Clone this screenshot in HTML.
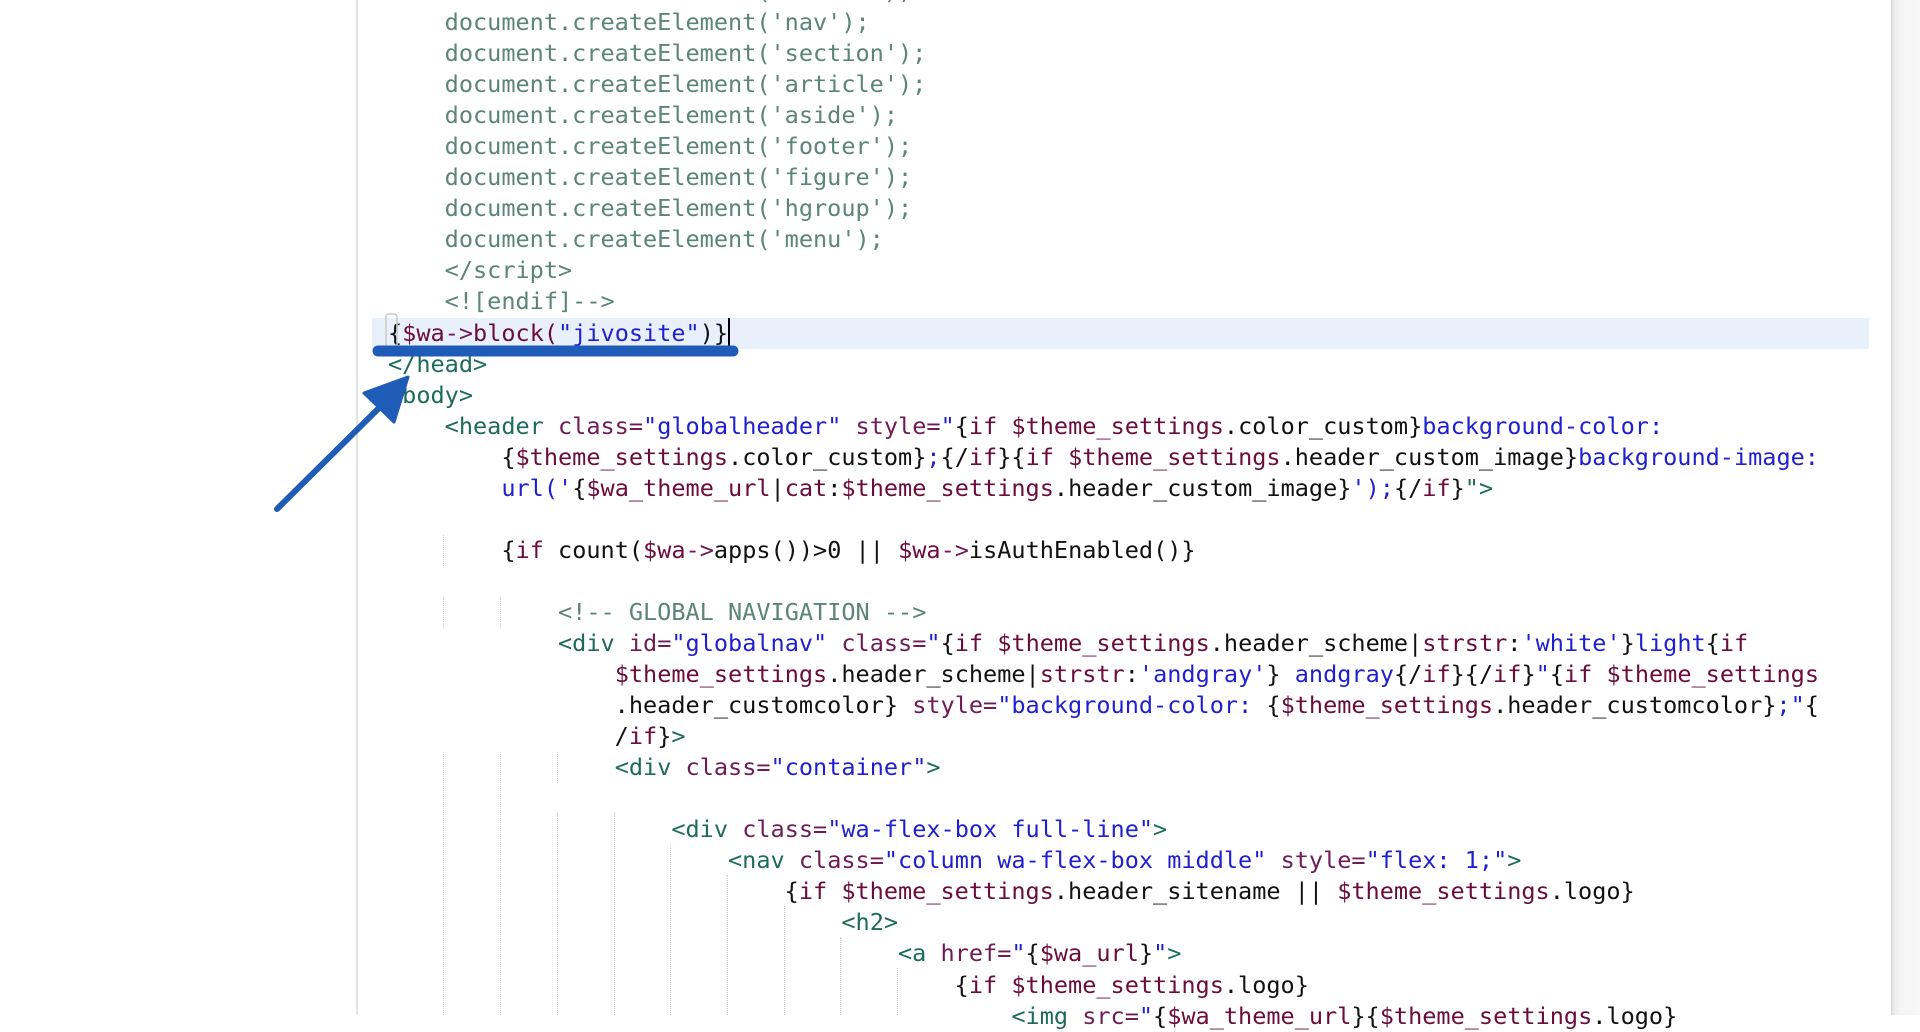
<!DOCTYPE html>
<html><head><meta charset="utf-8"><style>
html,body{margin:0;padding:0;width:1920px;height:1015px;overflow:hidden;background:#fff;}
.gut{position:absolute;left:356px;top:0;width:2px;height:1015px;background:#e4e4e4;}
.rp{position:absolute;left:1891px;top:0;width:29px;height:1015px;background:linear-gradient(90deg,#d6d6d6 0,#ececec 3px,#f5f5f5 10px,#f7f7f7);}
.hl{position:absolute;left:372px;top:318px;width:1497px;height:31px;background:#e8f1fb;}
pre{position:absolute;left:388px;top:-24px;margin:0;font-family:"DejaVu Sans Mono","Liberation Mono",monospace;font-size:23.54px;line-height:31.04px;color:#111;white-space:pre;}
.c{color:#5b8575}.t{color:#1d6b5a}.a{color:#6e1b56}.s{color:#1f1fcf}.k{color:#6a0c3c}
.g{position:absolute;width:0;border-left:1px dotted #cfcfcf;}
.cur{position:absolute;left:728px;top:318px;width:2px;height:31px;background:#000;}
</style></head><body>
<div class="gut"></div>
<div class="rp"></div>
<div class="hl"></div>
<div class="g" style="left:443px;top:535px;height:31px"></div>
<div class="g" style="left:443px;top:597px;height:31px"></div>
<div class="g" style="left:500px;top:597px;height:31px"></div>
<div class="g" style="left:443px;top:752px;height:263px"></div>
<div class="g" style="left:500px;top:752px;height:263px"></div>
<div class="g" style="left:557px;top:752px;height:31px"></div>
<div class="g" style="left:557px;top:813px;height:202px"></div>
<div class="g" style="left:614px;top:813px;height:202px"></div>
<div class="g" style="left:670px;top:844px;height:171px"></div>
<div class="g" style="left:727px;top:875px;height:140px"></div>
<div class="g" style="left:784px;top:906px;height:109px"></div>
<div class="g" style="left:840px;top:937px;height:78px"></div>
<div class="g" style="left:897px;top:968px;height:47px"></div>
<pre><span class="c">    document.createElement('header');
    document.createElement('nav');
    document.createElement('section');
    document.createElement('article');
    document.createElement('aside');
    document.createElement('footer');
    document.createElement('figure');
    document.createElement('hgroup');
    document.createElement('menu');
    &lt;/script&gt;
    &lt;![endif]--&gt;</span>
{<span class="k">$wa</span><span class="a">-&gt;</span><span class="k">block(</span><span class="s">"jivosite"</span>)}
<span class="t">&lt;/head&gt;</span>
<span class="t">&lt;body&gt;</span>
    <span class="t">&lt;header</span> <span class="a">class=</span><span class="s">"globalheader"</span> <span class="a">style=</span><span class="s">"</span>{<span class="k">if $theme_settings</span>.color_custom}<span class="s">background-color:</span>
        {<span class="k">$theme_settings</span>.color_custom}<span class="s">;</span>{/<span class="k">if</span>}{<span class="k">if $theme_settings</span>.header_custom_image}<span class="s">background-image:</span>
        <span class="s">url('</span>{<span class="k">$wa_theme_url</span>|<span class="k">cat</span>:<span class="k">$theme_settings</span>.header_custom_image}<span class="s">');</span>{/<span class="k">if</span>}<span class="t">"&gt;</span>

        {<span class="k">if</span> count(<span class="k">$wa</span><span class="a">-&gt;</span>apps())&gt;0 || <span class="k">$wa</span><span class="a">-&gt;</span>isAuthEnabled()}

            <span class="c">&lt;!-- GLOBAL NAVIGATION --&gt;</span>
            <span class="t">&lt;div</span> <span class="a">id=</span><span class="s">"globalnav"</span> <span class="a">class=</span><span class="s">"</span>{<span class="k">if $theme_settings</span>.header_scheme|<span class="k">strstr</span>:<span class="s">'white'</span>}<span class="s">light</span>{<span class="k">if</span>
                <span class="k">$theme_settings</span>.header_scheme|<span class="k">strstr</span>:<span class="s">'andgray'</span>} <span class="s">andgray</span>{/<span class="k">if</span>}{/<span class="k">if</span>}<span class="s">"</span>{<span class="k">if $theme_settings</span>
                .header_customcolor} <span class="a">style=</span><span class="s">"background-color: </span>{<span class="k">$theme_settings</span>.header_customcolor}<span class="s">;"</span>{
                /<span class="k">if</span>}<span class="t">&gt;</span>
                <span class="t">&lt;div</span> <span class="a">class=</span><span class="s">"container"</span><span class="t">&gt;</span>

                    <span class="t">&lt;div</span> <span class="a">class=</span><span class="s">"wa-flex-box full-line"</span><span class="t">&gt;</span>
                        <span class="t">&lt;nav</span> <span class="a">class=</span><span class="s">"column wa-flex-box middle"</span> <span class="a">style=</span><span class="s">"flex: 1;"</span><span class="t">&gt;</span>
                            {<span class="k">if $theme_settings</span>.header_sitename || <span class="k">$theme_settings</span>.logo}
                                <span class="t">&lt;h2&gt;</span>
                                    <span class="t">&lt;a</span> <span class="a">href=</span><span class="s">"</span>{<span class="k">$wa_url</span>}<span class="s">"</span><span class="t">&gt;</span>
                                        {<span class="k">if $theme_settings</span>.logo}
                                            <span class="t">&lt;img</span> <span class="a">src=</span><span class="s">"</span>{<span class="k">$wa_theme_url</span>}{<span class="k">$theme_settings</span>.logo}</pre>
<div class="cur"></div>
<svg style="position:absolute;left:0;top:0" width="1920" height="1015">
<rect x="386" y="314" width="11" height="34" rx="3" fill="none" stroke="#c8c8c8" stroke-width="1.5"/>
<line x1="378" y1="351" x2="733" y2="351" stroke="#1f5cb8" stroke-width="11" stroke-linecap="round"/>
<line x1="277" y1="509" x2="382" y2="405" stroke="#1f5cb8" stroke-width="6" stroke-linecap="round"/>
<path d="M408 377 L364 393 L394 422 Z" fill="#1f5cb8" stroke="#1f5cb8" stroke-width="3" stroke-linejoin="round"/>
</svg>
</body></html>
